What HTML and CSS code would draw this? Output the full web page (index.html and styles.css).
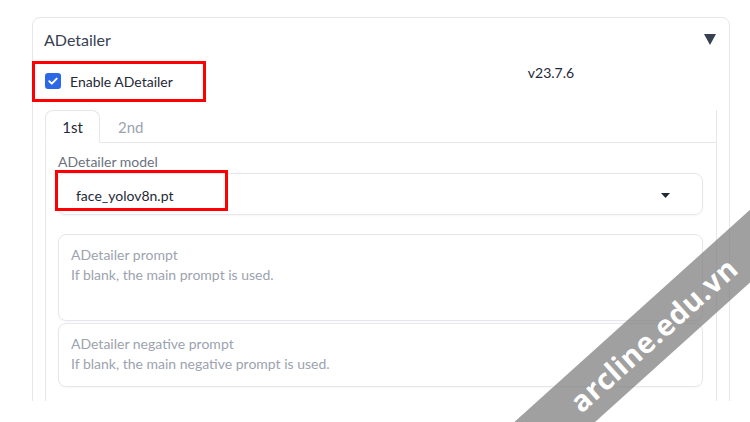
FILE: index.html
```html
<!DOCTYPE html>
<html>
<head>
<meta charset="utf-8">
<link rel="stylesheet" href="styles.css">
</head>
<body>
<div class="viewport">
  <div class="panel">
    <div class="panel-head">
      <span class="title">ADetailer</span>
      <svg class="caret" width="12" height="11" viewBox="0 0 12 11"><path d="M0 0H12L6 11Z" fill="#374151"/></svg>
    </div>
    <div class="enable-row">
      <label class="check">
        <span class="box"><svg width="16" height="16" viewBox="0 0 16 16"><path d="M4.3 8.2L6.8 10.6L11.7 5.6" fill="none" stroke="#fff" stroke-width="2" stroke-linecap="round" stroke-linejoin="round"/></svg></span>
        <span class="check-text">Enable ADetailer</span>
      </label>
      <span class="version">v23.7.6</span>
    </div>
    <div class="tabs">
      <div class="tab-nav">
        <div class="tab active">1st</div>
        <div class="tab">2nd</div>
        <div class="tab-fill"></div>
      </div>
      <div class="tab-panel">
        <div class="field-label">ADetailer model</div>
        <div class="dropdown">
          <span>face_yolov8n.pt</span>
          <svg width="9" height="5" viewBox="0 0 9 5"><path d="M0 0H9L4.5 5Z" fill="#1f2937"/></svg>
        </div>
        <div class="textbox tall">
          <div>ADetailer prompt</div>
          <div>If blank, the main prompt is used.</div>
        </div>
        <div class="textbox short">
          <div>ADetailer negative prompt</div>
          <div>If blank, the main negative prompt is used.</div>
        </div>
      </div>
    </div>
  </div>
</div>
<div class="mark mark-1"></div>
<div class="mark mark-2"></div>
<div class="wm-clip">
  <div class="watermark"><span>arcline.edu.vn</span></div>
</div>
</body>
</html>
```
FILE: styles.css
```css
* { box-sizing: border-box; }
html, body {
  margin: 0;
  padding: 0;
  width: 750px;
  height: 422px;
  overflow: hidden;
  background: #fff;
  font-family: Lato, "Noto Sans", sans-serif;
  position: relative;
}
.viewport {
  height: 401px;
  overflow: hidden;
  padding: 17px 0 0 32px;
}
.panel {
  width: 698px;
  height: 392px;
  border: 1px solid #e5e7eb;
  border-radius: 8px;
  padding: 0 12px;
  overflow: hidden;
}
.panel-head {
  height: 43px;
  display: flex;
  align-items: center;
  justify-content: space-between;
  padding-right: 1px;
}
.title {
  font-size: 16px;
  color: #374151;
  margin-left: -1px;
}
.caret { margin-top: -1px; }
.enable-row {
  height: 49px;
  display: flex;
}
.check {
  display: flex;
  align-items: center;
  height: 16px;
  margin-top: 12px;
}
.box {
  width: 16px;
  height: 16px;
  border-radius: 3px;
  background: #2b67e6;
  display: flex;
}
.check-text {
  margin-left: 9px;
  font-size: 14px;
  color: #1f2937;
}
.version {
  margin-left: 355px;
  margin-top: 3px;
  font-size: 14px;
  color: #1f2937;
  line-height: 18px;
}
.tab-nav {
  display: flex;
  height: 33px;
}
.tab {
  width: 55px;
  height: 33px;
  font-size: 15px;
  color: #9ca3af;
  display: flex;
  align-items: center;
  justify-content: center;
  border-bottom: 1px solid #e5e7eb;
  padding-top: 1px;
}
.tab + .tab { width: 64px; justify-content: flex-start; padding-left: 18px; }
.tab.active {
  color: #1f2937;
  border: 1px solid #e5e7eb;
  border-bottom-color: #fff;
  border-radius: 8px 8px 0 0;
}
.tab-fill {
  flex: 1;
  border-bottom: 1px solid #e5e7eb;
  border-right: 1px solid #e5e7eb;
}
.tab-panel {
  border: 1px solid #e5e7eb;
  border-top: none;
  height: 280px;
  padding: 9px 13px 0 11px;
}
.field-label {
  font-size: 14px;
  line-height: 20px;
  color: #6b7280;
  margin-left: 1px;
}
.dropdown {
  margin-top: 1px;
  height: 42px;
  border: 1px solid #e5e7eb;
  border-radius: 8px;
  box-shadow: 0 1px 2px rgba(0,0,0,0.04);
  display: flex;
  align-items: center;
  justify-content: space-between;
  padding: 2px 32px 0 18px;
  font-size: 14px;
  color: #1f2937;
}
.textbox {
  border: 1px solid #e5e7eb;
  border-radius: 8px;
  box-shadow: 0 1px 2px rgba(0,0,0,0.04);
  padding: 10px 12px 0 12px;
  font-size: 14px;
  line-height: 20px;
  color: #9ca3af;
  margin-left: 1px;
}
.textbox.tall { margin-top: 19px; height: 87px; }
.textbox.short { margin-top: 2px; height: 64px; }
.mark {
  position: absolute;
  border: 3px solid #ff0000;
}
.mark-1 { left: 32px; top: 61px; width: 174px; height: 41px; }
.mark-2 { left: 55px; top: 170px; width: 173px; height: 41px; }
.wm-clip {
  position: absolute;
  left: 0;
  top: 0;
  width: 750px;
  height: 422px;
  overflow: hidden;
  pointer-events: none;
}
.watermark {
  position: absolute;
  left: 358px;
  top: 302px;
  width: 600px;
  height: 54px;
  background: rgba(128,128,128,0.75);
  transform: rotate(-42deg);
  display: flex;
  align-items: center;
  justify-content: center;
}
.watermark span {
  font-family: "Open Sans", sans-serif;
  font-weight: 700;
  font-size: 29px;
  color: #fff;
  letter-spacing: 0.5px;
  margin-left: -14px;
}
```
